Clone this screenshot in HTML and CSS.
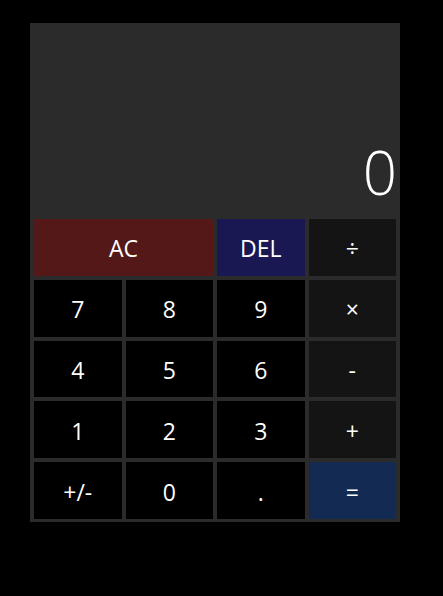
FILE: index.html
```html
<!DOCTYPE html>
<html>
<head>
<meta charset="utf-8">
<link rel="stylesheet" href="styles.css">
</head>
<body>
<div class="calc">
  <div class="display"><span class="value">0</span></div>
  <div class="keys">
    <button class="key ac span2">AC</button>
    <button class="key del">DEL</button>
    <button class="key op">÷</button>
    <button class="key">7</button>
    <button class="key">8</button>
    <button class="key">9</button>
    <button class="key op">×</button>
    <button class="key">4</button>
    <button class="key">5</button>
    <button class="key">6</button>
    <button class="key op">-</button>
    <button class="key">1</button>
    <button class="key">2</button>
    <button class="key">3</button>
    <button class="key op">+</button>
    <button class="key">+/-</button>
    <button class="key">0</button>
    <button class="key">.</button>
    <button class="key eq">=</button>
  </div>
</div>
</body>
</html>
```
FILE: styles.css
```css
html, body {
  margin: 0;
  padding: 0;
  background: #000;
}
body {
  padding: 23px 0 0 30px;
  font-family: "Open Sans", "Noto Sans", sans-serif;
}
.calc {
  width: 370px;
  height: 499px;
  background: #2b2b2b;
  display: flex;
  flex-direction: column;
}
.display {
  height: 196px;
  display: flex;
  align-items: flex-end;
  justify-content: flex-end;
  padding-right: 3px;
  box-sizing: border-box;
}
.value {
  color: #fff;
  font-size: 60px;
  font-weight: 300;
  line-height: 1;
  margin-bottom: 17px;
}
.keys {
  display: grid;
  grid-template-columns: repeat(4, 1fr);
  grid-template-rows: repeat(5, 1fr);
  gap: 4px;
  padding: 0 4px 3px 4px;
  height: 303px;
  box-sizing: border-box;
}
.key {
  background: #000;
  color: #fff;
  border: none;
  margin: 0;
  padding: 2px 0 0 0;
  font-family: "Open Sans", "Noto Sans", sans-serif;
  font-size: 23px;
}
.span2 { grid-column: span 2; }
.ac { background: #541818; }
.del { background: #191853; }
.op { background: #141414; }
.eq { background: #132a52; }
```
